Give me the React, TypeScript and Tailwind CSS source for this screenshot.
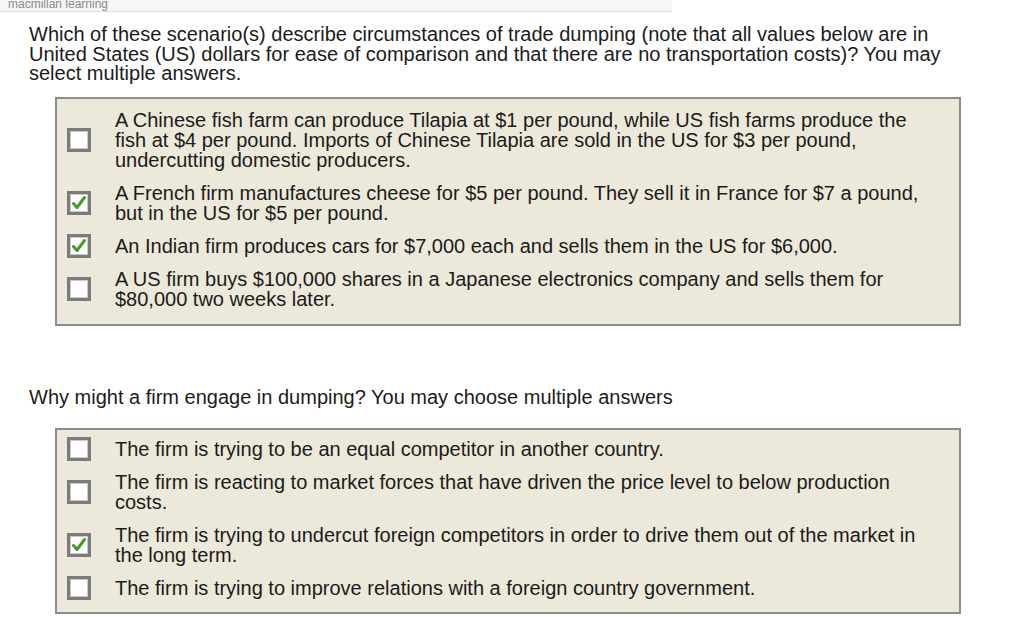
import React from 'react';

type Choice = { text: string; checked: boolean };

const q1: Choice[] = [
  {
    text: 'A Chinese fish farm can produce Tilapia at $1 per pound, while US fish farms produce the fish at $4 per pound. Imports of Chinese Tilapia are sold in the US for $3 per pound, undercutting domestic producers.',
    checked: false,
  },
  {
    text: 'A French firm manufactures cheese for $5 per pound. They sell it in France for $7 a pound, but in the US for $5 per pound.',
    checked: true,
  },
  { text: 'An Indian firm produces cars for $7,000 each and sells them in the US for $6,000.', checked: true },
  {
    text: 'A US firm buys $100,000 shares in a Japanese electronics company and sells them for $80,000 two weeks later.',
    checked: false,
  },
];

const q2: Choice[] = [
  { text: 'The firm is trying to be an equal competitor in another country.', checked: false },
  {
    text: 'The firm is reacting to market forces that have driven the price level to below production costs.',
    checked: false,
  },
  {
    text: 'The firm is trying to undercut foreign competitors in order to drive them out of the market in the long term.',
    checked: true,
  },
  { text: 'The firm is trying to improve relations with a foreign country government.', checked: false },
];

const Box = ({ checked }: { checked: boolean }) => (
  <div className="w-[24px] h-[24px] shrink-0 border-[3px] border-[#7b7b7b] bg-white shadow-[inset_0_0_0_1px_#c9c9c9] flex items-center justify-center">
    {checked && (
      <svg width="16" height="16" viewBox="0 0 16 16">
        <path d="M2.5 8.5 L6 12.5 L13.5 2.5" fill="none" stroke="#46992b" strokeWidth="3" strokeLinecap="round" strokeLinejoin="round" />
      </svg>
    )}
  </div>
);

const ChoiceList = ({ items, className }: { items: Choice[]; className: string }) => (
  <div className={`ml-[55px] w-[906px] border-2 border-[#8d8d8d] bg-[#ece8da] flex flex-col gap-[13px] ${className}`}>
    {items.map((c, i) => (
      <div key={i} className="flex items-center">
        <div className="w-[58px] pl-[10px] shrink-0 -my-[2px]">
          <Box checked={c.checked} />
        </div>
        <p className="w-[822px]">{c.text}</p>
      </div>
    ))}
  </div>
);

export default function App() {
  return (
    <div className="w-[1024px] h-[617px] bg-white overflow-hidden text-[#1b1b1b] text-[20px] leading-[20px] font-['Liberation_Sans',Arial,sans-serif]">
      <div className="w-[672px] h-[12px] bg-[#f6f6f6] border-b border-[#dedede] overflow-hidden">
        <span className="block -mt-[3px] pl-[8px] text-[12px] leading-[14px] text-[#8a8a8a]">macmillan learning</span>
      </div>

      <p className="mt-[13px] ml-[29px] w-[940px] leading-[19.5px]">
        Which of these scenario(s) describe circumstances of trade dumping (note that all values below are in United
        States (US) dollars for ease of comparison and that there are no transportation costs)? You may select multiple
        answers.
      </p>

      <ChoiceList items={q1} className="mt-[13px] pt-[11px] pb-[15px]" />

      <p className="mt-[61px] ml-[29px]">Why might a firm engage in dumping? You may choose multiple answers</p>

      <ChoiceList items={q2} className="mt-[21px] pt-[9px] pb-[14px]" />
    </div>
  );
}
